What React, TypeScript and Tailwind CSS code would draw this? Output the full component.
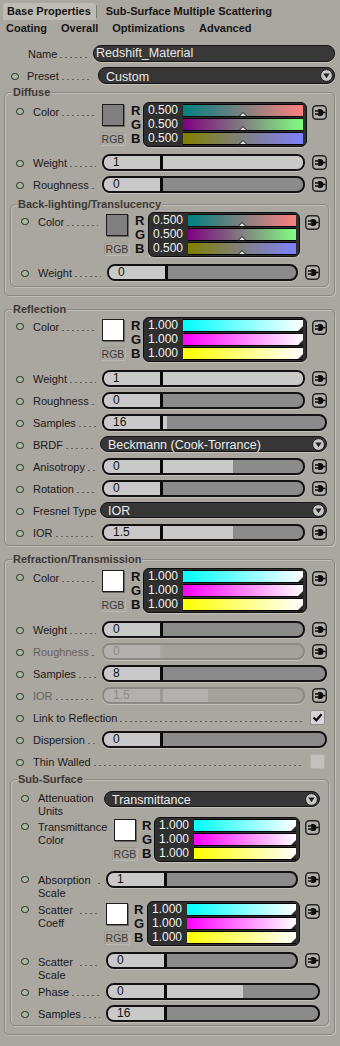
import React from "react";
import clsx from "clsx";

type Kind = "half" | "full";

const GRADS: Record<Kind, string[]> = {
  half: [
    "bg-[linear-gradient(to_right,#008080,#ff8080)]",
    "bg-[linear-gradient(to_right,#800080,#80ff80)]",
    "bg-[linear-gradient(to_right,#808000,#8080ff)]",
  ],
  full: [
    "bg-[linear-gradient(to_right,#00ffff,#ffffff)]",
    "bg-[linear-gradient(to_right,#ff00ff,#ffffff)]",
    "bg-[linear-gradient(to_right,#ffff00,#ffffff)]",
  ],
};

function Dot({ className }: { className?: string }) {
  return (
    <span
      className={clsx(
        "block w-[8px] h-[7px] shrink-0 rounded-full border border-[#2a2a2a] bg-[#a3bb99]",
        className
      )}
    />
  );
}

function Leader({ className }: { className?: string }) {
  return (
    <span
      className={clsx(
        "block flex-1 min-w-0 h-px mb-[3px] ml-[3px] mr-[6px] bg-[linear-gradient(to_right,#66625c_40%,transparent_40%)] bg-[length:5px_1px] bg-repeat-x",
        className
      )}
    />
  );
}

function Label({
  text,
  w,
  disabled,
  leader = true,
  className,
  leaderClass,
}: {
  text: string;
  w?: string;
  disabled?: boolean;
  leader?: boolean;
  className?: string;
  leaderClass?: string;
}) {
  return (
    <div className={clsx("flex items-end shrink-0 pt-[2px]", w, className)}>
      <span
        className={clsx(
          "text-[11px] leading-[13px] whitespace-nowrap",
          disabled ? "text-[#67635e]" : "text-[#1a1a1a]"
        )}
      >
        {text}
      </span>
      {leader ? <Leader className={leaderClass} /> : null}
    </div>
  );
}

function TwoLineLabel({
  first,
  second,
  w,
  leader,
  className,
}: {
  first: string;
  second: string;
  w: string;
  leader?: boolean;
  className?: string;
}) {
  return (
    <div className={clsx("flex flex-col shrink-0 text-[11px] leading-[13px] text-[#1a1a1a]", w, className)}>
      <div className="flex items-end">
        <span className="whitespace-nowrap">{first}</span>
        {leader ? <Leader className="ml-[7px]" /> : null}
      </div>
      <span className="whitespace-nowrap">{second}</span>
    </div>
  );
}

function Plug({ className }: { className?: string }) {
  return (
    <svg width="15" height="15" viewBox="0 0 15 15" className={clsx("shrink-0", className)}>
      <rect x="0.75" y="0.75" width="13.5" height="13.5" rx="3.5" fill="#b3afa9" stroke="#262626" strokeWidth="1.5" />
      <path d="M6.2 4 H8 A3.5 3.5 0 0 1 8 11 H6.2 Z" fill="#0d0d0d" />
      <rect x="3" y="5.2" width="3.5" height="1.5" fill="#0d0d0d" />
      <rect x="3" y="8.3" width="3.5" height="1.5" fill="#0d0d0d" />
      <rect x="11" y="6.8" width="2.6" height="1.4" fill="#0d0d0d" />
    </svg>
  );
}

function Slider({
  value,
  fill = 0,
  disabled = false,
  noMarker = false,
  className,
}: {
  value: string;
  fill?: number;
  disabled?: boolean;
  noMarker?: boolean;
  className?: string;
}) {
  return (
    <div
      className={clsx(
        "flex-1 min-w-0 h-[17px] flex overflow-hidden rounded-[8px] border-2 shadow-[0_1px_0_#c4c0ba]",
        disabled ? "border-[#8d8985] bg-[#a5a19d]" : "border-[#121212] bg-[#8b8b8b]",
        className
      )}
    >
      <div
        className={clsx(
          "w-[56px] shrink-0 pl-[9px] text-[12px] leading-[13px]",
          disabled ? "bg-[#b3b1ae] text-[#8b8985]" : "bg-[#c9c9c9] text-[#111]"
        )}
      >
        {value}
      </div>
      <div
        className={clsx(
          "w-[3px] shrink-0",
          noMarker ? "bg-[#a9a6a2]" : disabled ? "bg-[#9c9894]" : "bg-[#0b0b0b]"
        )}
      />
      <div className="flex-1 relative">
        <div
          className={clsx("h-full", disabled ? "bg-[#b3b1ae]" : "bg-[#c9c9c9]")}
          style={{ width: `${fill}%` }}
        />
      </div>
    </div>
  );
}

function ColorBlock({ v, kind }: { v: string; kind: Kind }) {
  const g = GRADS[kind];
  return (
    <div className="flex-1 min-w-0 h-[45px] rounded-[6px] border border-[#0f0f0f] bg-[#2f2f2f] py-[1px] pr-[3px] flex flex-col gap-[1px] shadow-[0_1px_0_#c4c0ba]">
      {g.map((cls, i) => (
        <div key={i} className="flex h-[13px]">
          <div className="w-[39px] shrink-0 pl-[4px] text-[12px] leading-[13px] text-[#f2f2f2]">{v}</div>
          <div className={clsx("relative flex-1 border-y border-[#050505]", cls)}>
            {kind === "half" ? (
              <svg
                className="absolute bottom-[-1px] left-1/2 -translate-x-1/2"
                width="9"
                height="5"
                viewBox="0 0 9 5"
              >
                <polygon points="0.5,4.5 4.5,0.5 8.5,4.5" fill="#e8e8e8" stroke="#111" strokeWidth="1" />
              </svg>
            ) : (
              <svg className="absolute bottom-0 right-0" width="5" height="5" viewBox="0 0 5 5">
                <polygon points="5,0 5,5 0,5" fill="#2a2a2a" />
              </svg>
            )}
          </div>
        </div>
      ))}
    </div>
  );
}

function SwatchCol({ white, className }: { white?: boolean; className?: string }) {
  return (
    <div className={clsx("w-[26px] shrink-0 flex flex-col items-center pt-[2px]", className)}>
      <div
        className={clsx(
          "w-[22px] h-[22px] border border-[#1c1c1c] shadow-[1px_1px_0_#6b6762]",
          white ? "bg-white" : "bg-[#808080]"
        )}
      />
      <div className="mt-[6px] w-[26px] h-[14px] flex items-center justify-center rounded-[2px] border border-[#bcb8b2] border-t-[#9e9a94] border-l-[#9e9a94] text-[10.5px] leading-[12px] text-[#3a3a3a]">
        RGB
      </div>
    </div>
  );
}

function Letters({ className }: { className?: string }) {
  return (
    <div className={clsx("shrink-0 flex flex-col pt-[2px] text-[13px] font-bold leading-[14px] text-[#111]", className)}>
      <span>R</span>
      <span>G</span>
      <span>B</span>
    </div>
  );
}

function Dropdown({ text, className }: { text: string; className?: string }) {
  return (
    <div
      className={clsx(
        "flex-1 min-w-0 h-[16px] flex items-center rounded-[8px] border border-[#141414] bg-[#363636] shadow-[0_1px_0_#c4c0ba]",
        className
      )}
    >
      <span className="flex-1 pl-[7px] pt-[2px] text-[12.5px] leading-[14px] text-[#ececec] whitespace-nowrap">
        {text}
      </span>
      <svg width="13" height="13" viewBox="0 0 13 13" className="shrink-0 mr-[1px]">
        <circle cx="6.5" cy="6.5" r="5.9" fill="#c6c6c6" stroke="#1a1a1a" strokeWidth="1" />
        <polygon points="3.4,4.6 9.6,4.6 6.5,9.2" fill="#222" />
      </svg>
    </div>
  );
}

function Checkbox({ checked }: { checked?: boolean }) {
  return checked ? (
    <div className="w-[15px] h-[15px] shrink-0 rounded-[2px] bg-[#d6d6d6] border border-[#8f8f8f] flex items-center justify-center">
      <svg width="11" height="11" viewBox="0 0 11 11">
        <path d="M1.5 5.5 L4.3 8.3 L9.6 2.2" fill="none" stroke="#111" strokeWidth="2.3" />
      </svg>
    </div>
  ) : (
    <div className="w-[15px] h-[15px] shrink-0 rounded-[2px] bg-[#c3c1bd] border border-[#b3afa9]" />
  );
}

function Group({
  title,
  className,
  nested,
  children,
}: {
  title: string;
  className?: string;
  nested?: boolean;
  children: React.ReactNode;
}) {
  return (
    <fieldset
      className={clsx(
        "border border-[#8c8883] rounded-[5px] shadow-[inset_1px_1px_0_#c2beb8,1px_1px_0_#c2beb8]",
        className
      )}
    >
      <legend
        className={clsx(
          "px-[1px] text-[11px] font-bold leading-[13px] text-[#3d3a36] bg-[#aaa6a0]",
          nested ? "ml-[6px]" : "ml-[7px]"
        )}
      >
        {title}
      </legend>
      {children}
    </fieldset>
  );
}

const OUT = "pl-[11px] pr-[7px]";
const IN = "pl-[10px] pr-[8px]";

function SliderRow({
  label,
  value,
  fill,
  plug = true,
  pad,
  labelW,
  disabled,
  noMarker,
  labelDisabled,
}: {
  label: string;
  value: string;
  fill?: number;
  plug?: boolean;
  pad: string;
  labelW: string;
  disabled?: boolean;
  noMarker?: boolean;
  labelDisabled?: boolean;
}) {
  return (
    <div className={clsx("h-[22px] flex items-center", pad)}>
      <Dot className="mr-[9px] mt-[2px]" />
      <Label text={label} w={labelW} disabled={labelDisabled} />
      <Slider value={value} fill={fill} disabled={disabled} noMarker={noMarker} />
      {plug ? <Plug className="ml-[7px]" /> : null}
    </div>
  );
}

function DropRow({ label, value, pad, labelW, leader = true }: { label: string; value: string; pad: string; labelW: string; leader?: boolean }) {
  return (
    <div className={clsx("h-[22px] flex items-center", pad)}>
      <Dot className="mr-[9px] mt-[2px]" />
      <Label text={label} w={labelW} leader={leader} />
      <Dropdown text={value} />
    </div>
  );
}

function ColorRow({
  pad,
  labelW,
  lettersW,
  v,
  kind,
  className,
}: {
  pad: string;
  labelW: string;
  lettersW: string;
  v: string;
  kind: Kind;
  className?: string;
}) {
  return (
    <div className={clsx("flex items-start h-[45px]", pad, className)}>
      <Dot className="mr-[9px] mt-[6px]" />
      <Label text="Color" w={labelW} className="mt-[2px]" />
      <SwatchCol white={kind === "full"} />
      <Letters className={lettersW} />
      <ColorBlock v={v} kind={kind} />
      <Plug className="ml-[5px] mt-[3px]" />
    </div>
  );
}

function CheckRow({ label, checked, pad }: { label: string; checked?: boolean; pad: string }) {
  return (
    <div className={clsx("h-[22px] flex items-center", pad)}>
      <Dot className="mr-[9px] mt-[2px]" />
      <Label text={label} w="flex-1" leaderClass="mr-[5px]" className="min-w-0" />
      <Checkbox checked={checked} />
      <span className="w-[2px] shrink-0" />
    </div>
  );
}

export default function App() {
  return (
    <div className="w-[340px] min-h-[1046px] bg-[#aaa6a0] font-['Liberation_Sans',Arial,sans-serif] text-[#1a1a1a] overflow-hidden">
      {/* Tabs */}
      <div className="h-[20px] flex items-end pl-[3px] text-[11px] font-bold text-[#161616]">
        <div className="h-[17px] pl-[4px] pr-[5px] bg-[#bebab4] rounded-t-[3px] leading-[17px] whitespace-nowrap">
          Base Properties
        </div>
        <div className="w-px h-[13px] mb-[2px] bg-[#7e7a75]" />
        <div className="h-[17px] pl-[9px] leading-[17px] whitespace-nowrap">Sub-Surface Multiple Scattering</div>
      </div>
      <div className="h-[17px] flex items-center gap-[14px] pl-[6px] text-[11px] font-bold text-[#161616]">
        <span>Coating</span>
        <span>Overall</span>
        <span>Optimizations</span>
        <span>Advanced</span>
      </div>

      {/* Name */}
      <div className="mt-[8px] h-[17px] flex items-center pl-[28px] pr-[5px]">
        <Label text="Name" w="w-[65px]" className="pt-0" />
        <div className="flex-1 h-[17px] rounded-[8px] bg-[#383838] border border-[#161616] pl-[2px] text-[12.5px] leading-[15px] text-[#e8e8e8] shadow-[0_1px_0_#c4c0ba]">
          Redshift_Material
        </div>
      </div>

      {/* Preset */}
      <div className="mt-[5px] h-[17px] flex items-center pl-[11px] pr-[5px]">
        <Dot className="mr-[8px] mt-[2px]" />
        <Label text="Preset" w="w-[71px]" />
        <Dropdown text="Custom" className="h-[17px]" />
      </div>

      {/* Diffuse */}
      <Group title="Diffuse" className="mt-[2px] ml-[4px] w-[331px] pb-[8px]">
        <ColorRow pad={OUT} labelW="w-[67px]" lettersW="w-[17px] pl-[5px]" v="0.500" kind="half" className="mt-[3px]" />
        <div className="mt-[4px]" />
        <SliderRow label="Weight" value="1" fill={100} pad={OUT} labelW="w-[69px]" />
        <SliderRow label="Roughness" value="0" fill={0} pad={OUT} labelW="w-[69px]" />

        <Group title="Back-lighting/Translucency" nested className="mt-[3px] mx-[5px] pb-[3px]">
          <ColorRow pad={IN} labelW="w-[66px]" lettersW="w-[18px] pl-[5px]" v="0.500" kind="half" className="mt-[1px]" />
          <div className="mt-[4px]" />
          <SliderRow label="Weight" value="0" fill={0} pad={IN} labelW="w-[69px]" />
        </Group>
      </Group>

      {/* Reflection */}
      <Group title="Reflection" className="mt-[7px] ml-[4px] w-[331px] pb-[2px]">
        <ColorRow pad={OUT} labelW="w-[67px]" lettersW="w-[17px] pl-[5px]" v="1.000" kind="full" className="mt-[1px]" />
        <div className="mt-[5px]" />
        <SliderRow label="Weight" value="1" fill={100} pad={OUT} labelW="w-[69px]" />
        <SliderRow label="Roughness" value="0" fill={0} pad={OUT} labelW="w-[69px]" />
        <SliderRow label="Samples" value="16" fill={2.5} plug={false} pad={OUT} labelW="w-[69px]" />
        <DropRow label="BRDF" value="Beckmann (Cook-Torrance)" pad={OUT} labelW="w-[67px]" />
        <SliderRow label="Anisotropy" value="0" fill={50} pad={OUT} labelW="w-[69px]" />
        <SliderRow label="Rotation" value="0" fill={0} pad={OUT} labelW="w-[69px]" />
        <DropRow label="Fresnel Type" value="IOR" pad={OUT} labelW="w-[67px]" leader={false} />
        <SliderRow label="IOR" value="1.5" fill={50} pad={OUT} labelW="w-[69px]" />
      </Group>

      {/* Refraction */}
      <Group title="Refraction/Transmission" className="mt-[7px] ml-[4px] w-[331px] pb-[8px]">
        <ColorRow pad={OUT} labelW="w-[67px]" lettersW="w-[17px] pl-[5px]" v="1.000" kind="full" className="mt-[2px]" />
        <div className="mt-[5px]" />
        <SliderRow label="Weight" value="0" fill={0} pad={OUT} labelW="w-[69px]" />
        <SliderRow label="Roughness" value="0" fill={0} pad={OUT} labelW="w-[69px]" disabled noMarker labelDisabled />
        <SliderRow label="Samples" value="8" fill={0} plug={false} pad={OUT} labelW="w-[69px]" />
        <SliderRow label="IOR" value="1.5" fill={32} pad={OUT} labelW="w-[69px]" disabled labelDisabled />
        <CheckRow label="Link to Reflection" checked pad={OUT} />
        <SliderRow label="Dispersion" value="0" fill={0} plug={false} pad={OUT} labelW="w-[69px]" />
        <CheckRow label="Thin Walled" pad={OUT} />

        <Group title="Sub-Surface" nested className="mt-[1px] mx-[5px] pb-[1px]">
          {/* Attenuation Units */}
          <div className={clsx("mt-[5px] h-[26px] flex items-start", IN)}>
            <Dot className="mr-[9px] mt-[4px]" />
            <TwoLineLabel first="Attenuation" second="Units" w="w-[66px]" className="mt-[1px]" />
            <Dropdown text="Transmittance" />
          </div>
          {/* Transmittance Color */}
          <div className={clsx("h-[45px] flex items-start", IN)}>
            <Dot className="mr-[9px] mt-[6px]" />
            <TwoLineLabel first="Transmittance" second="Color" w="w-[74px]" className="mt-[4px]" />
            <SwatchCol white />
            <Letters className="w-[16px] pl-[4px]" />
            <ColorBlock v="1.000" kind="full" />
            <Plug className="ml-[5px] mt-[3px]" />
          </div>
          {/* Absorption Scale */}
          <div className={clsx("mt-[9px] h-[30px] flex items-start", IN)}>
            <Dot className="mr-[9px] mt-[5px]" />
            <TwoLineLabel first="Absorption" second="Scale" w="w-[68px]" leader className="mt-[3px]" />
            <Slider value="1" fill={0} />
            <Plug className="ml-[7px] mt-[1px]" />
          </div>
          {/* Scatter Coeff */}
          <div className={clsx("h-[45px] flex items-start", IN)}>
            <Dot className="mr-[9px] mt-[5px]" />
            <TwoLineLabel first="Scatter" second="Coeff" w="w-[66px]" leader className="mt-[3px]" />
            <SwatchCol white className="pt-[1px]" />
            <Letters className="w-[17px] pl-[4px]" />
            <ColorBlock v="1.000" kind="full" />
            <Plug className="ml-[5px] mt-[3px]" />
          </div>
          {/* Scatter Scale */}
          <div className={clsx("mt-[6px] h-[28px] flex items-start", IN)}>
            <Dot className="mr-[9px] mt-[6px]" />
            <TwoLineLabel first="Scatter" second="Scale" w="w-[68px]" leader className="mt-[4px]" />
            <Slider value="0" fill={0} />
            <Plug className="ml-[7px] mt-[1px]" />
          </div>
          <SliderRow label="Phase" value="0" fill={50} plug={false} pad={IN} labelW="w-[68px]" />
          <SliderRow label="Samples" value="16" fill={0} plug={false} pad={IN} labelW="w-[68px]" />
        </Group>
      </Group>
    </div>
  );
}
